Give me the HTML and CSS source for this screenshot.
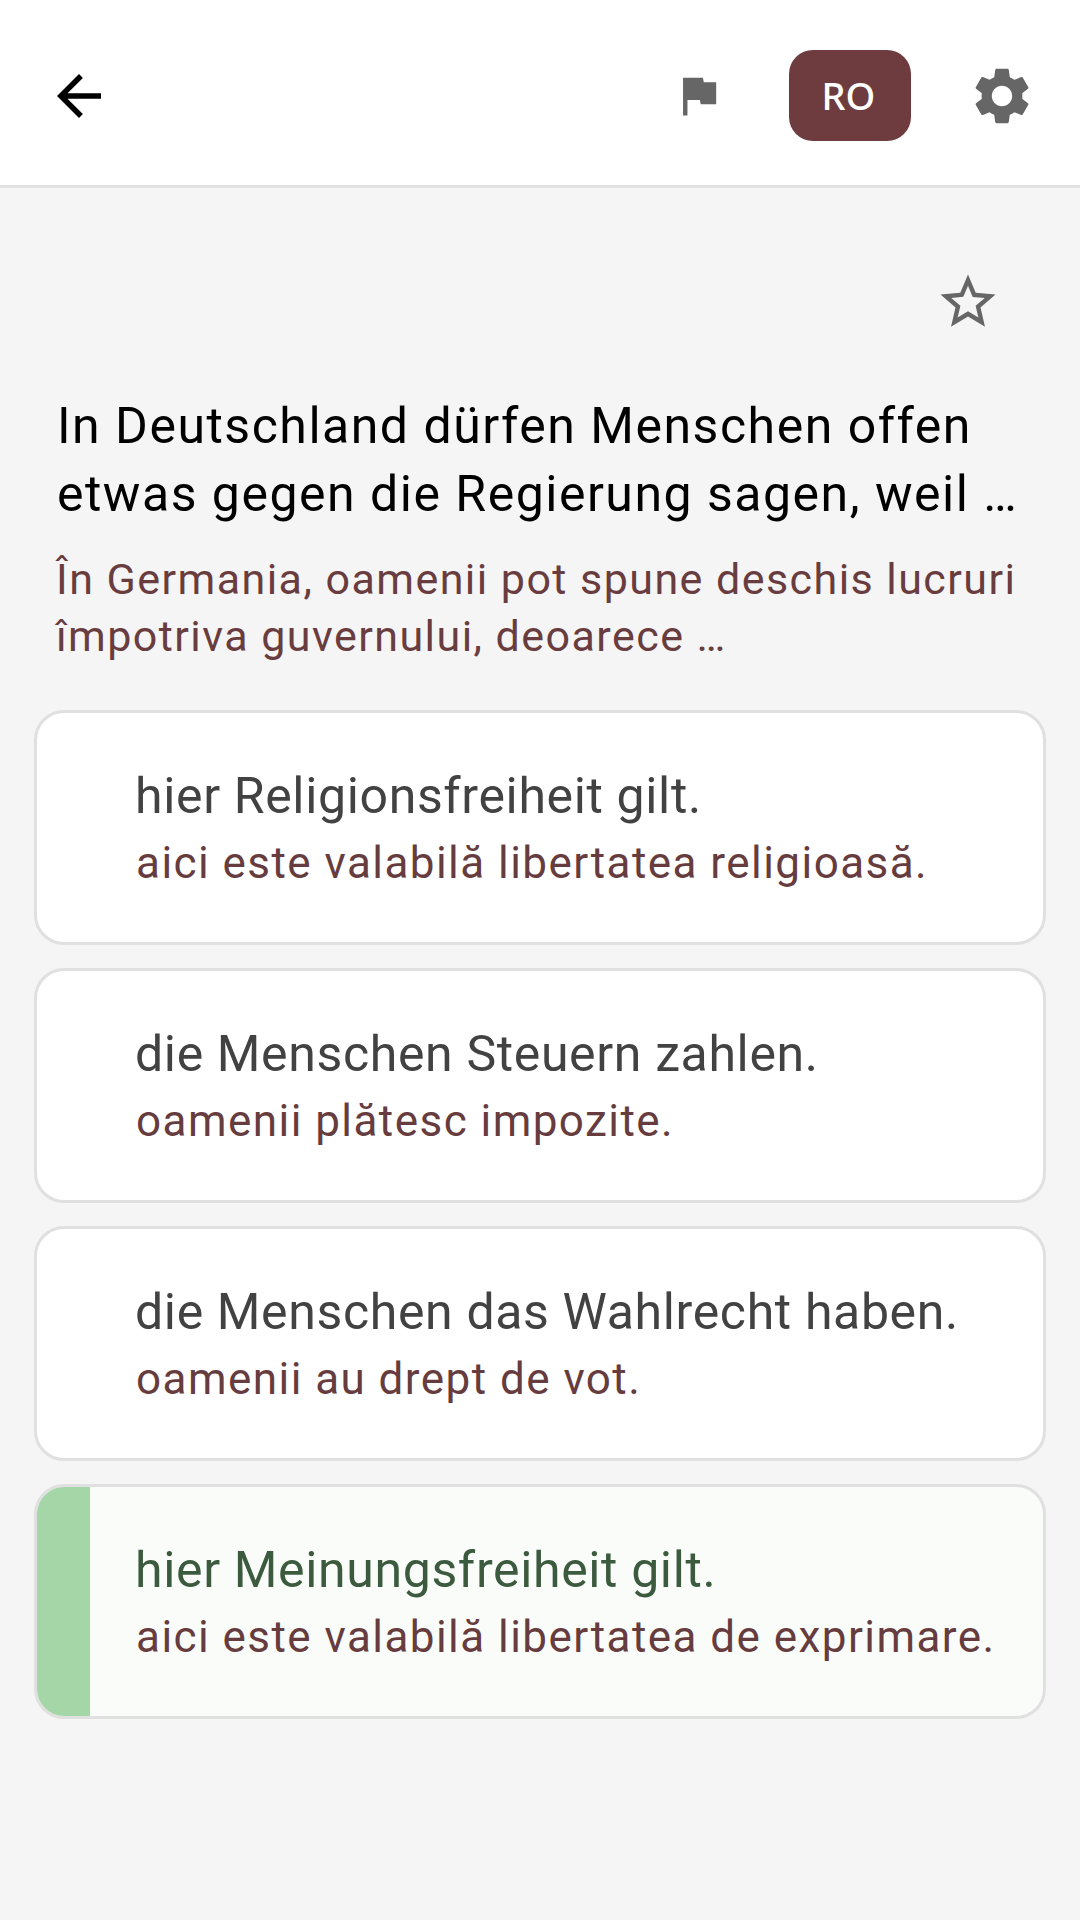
FILE: index.html
```html
<!DOCTYPE html>
<html lang="de">
<head>
    <meta charset="UTF-8">
    <meta name="viewport" content="width=device-width, initial-scale=1.0">
    <title>Frage</title>
    <link rel="stylesheet" href="styles.css">
</head>
<body>
    <header class="top-bar">
        <svg class="icon icon-back" viewBox="0 0 24 24"><path d="M20 11H7.83l5.59-5.59L12 4l-8 8 8 8 1.41-1.41L7.83 13H20v-2z"/></svg>
        <div class="top-actions">
            <svg class="icon icon-flag" viewBox="0 0 24 24"><path d="M14.4 6L14 4H5v17h2v-7h5.6l.4 2h7V6z"/></svg>
            <button class="lang-btn">RO</button>
            <svg class="icon icon-gear" viewBox="0 0 24 24"><path d="M19.14 12.94c.04-.3.06-.61.06-.94 0-.32-.02-.64-.07-.94l2.03-1.58c.18-.14.23-.41.12-.61l-1.92-3.32c-.12-.22-.37-.29-.59-.22l-2.39.96c-.5-.38-1.03-.7-1.62-.94l-.36-2.54c-.04-.24-.24-.41-.48-.41h-3.84c-.24 0-.43.17-.47.41l-.36 2.54c-.59.24-1.13.57-1.62.94l-2.39-.96c-.22-.08-.47 0-.59.22L2.74 8.87c-.12.21-.08.47.12.61l2.03 1.58c-.05.3-.09.63-.09.94s.02.64.07.94l-2.03 1.58c-.18.14-.23.41-.12.61l1.92 3.32c.12.22.37.29.59.22l2.39-.96c.5.38 1.03.7 1.62.94l.36 2.54c.05.24.24.41.48.41h3.84c.24 0 .44-.17.47-.41l.36-2.54c.59-.24 1.13-.56 1.62-.94l2.39.96c.22.08.47 0 .59-.22l1.92-3.32c.12-.22.07-.47-.12-.61l-2.01-1.58zM12 15.6c-1.98 0-3.6-1.62-3.6-3.6s1.62-3.6 3.6-3.6 3.6 1.62 3.6 3.6-1.62 3.6-3.6 3.6z"/></svg>
        </div>
    </header>

    <main class="content">
        <div class="star-row">
            <svg class="icon icon-star" viewBox="0 0 24 24"><path d="M22 9.24l-7.19-.62L12 2 9.19 8.63 2 9.24l5.46 4.73L5.82 21 12 17.27 18.18 21l-1.63-7.03L22 9.24zM12 15.4l-3.76 2.27 1-4.28-3.32-2.88 4.38-.38L12 6.1l1.71 4.04 4.38.38-3.32 2.88 1 4.28L12 15.4z"/></svg>
        </div>

        <div class="question">
            <h1>In Deutschland dürfen Menschen offen etwas gegen die Regierung sagen, weil …</h1>
            <p>În Germania, oamenii pot spune deschis lucruri împotriva guvernului, deoarece …</p>
        </div>

        <div class="answers">
            <div class="answer">
                <div class="answer-text">
                    <div class="answer-de">hier Religionsfreiheit gilt.</div>
                    <div class="answer-ro">aici este valabilă libertatea religioasă.</div>
                </div>
            </div>
            <div class="answer">
                <div class="answer-text">
                    <div class="answer-de">die Menschen Steuern zahlen.</div>
                    <div class="answer-ro">oamenii plătesc impozite.</div>
                </div>
            </div>
            <div class="answer">
                <div class="answer-text">
                    <div class="answer-de">die Menschen das Wahlrecht haben.</div>
                    <div class="answer-ro">oamenii au drept de vot.</div>
                </div>
            </div>
            <div class="answer correct">
                <div class="answer-mark"></div>
                <div class="answer-text">
                    <div class="answer-de">hier Meinungsfreiheit gilt.</div>
                    <div class="answer-ro">aici este valabilă libertatea de exprimare.</div>
                </div>
            </div>
        </div>
    </main>
</body>
</html>
```

FILE: styles.css
```css
* {
    margin: 0;
    padding: 0;
    box-sizing: border-box;
}

body {
    width: 1080px;
    height: 1920px;
    background-color: #f5f5f5;
    font-family: "Roboto", sans-serif;
    overflow: hidden;
}

.icon {
    display: block;
    flex: none;
    fill: #666666;
}

/* Top bar */
.top-bar {
    height: 188px;
    background-color: #fff;
    border-bottom: 3px solid #e2e2e2;
    display: flex;
    align-items: center;
    justify-content: space-between;
    padding: 6px 44px 0 46px;
}

.icon-back {
    width: 66px;
    height: 66px;
    fill: #000;
}

.top-actions {
    display: flex;
    align-items: center;
}

.icon-flag {
    width: 53px;
    height: 53px;
}

.lang-btn {
    width: 122px;
    height: 91px;
    margin: 0 57px 0 64px;
    padding: 0 3px 2px 0;
    border: none;
    border-radius: 24px;
    background-color: #6e3c3e;
    color: #fff;
    font-family: "Noto Sans", sans-serif;
    font-size: 38px;
    font-weight: 500;
}

.icon-gear {
    width: 68px;
    height: 68px;
}

/* Question */
.content {
    padding: 0 34px;
}

.star-row {
    display: flex;
    justify-content: flex-end;
    padding: 81px 45px 0 0;
}

.icon-star {
    width: 66px;
    height: 66px;
}

.question {
    padding: 57px 23px 0;
}

.question h1 {
    font-size: 50px;
    font-weight: 400;
    line-height: 68px;
    letter-spacing: 1.5px;
    color: #000;
}

.question p {
    margin: 23px 0 0 -1px;
    font-size: 43px;
    line-height: 57px;
    letter-spacing: 1.45px;
    color: #693d3f;
}

/* Answers */
.answers {
    display: flex;
    flex-direction: column;
    gap: 23px;
    margin-top: 45px;
}

.answer {
    height: 235px;
    display: flex;
    background-color: #fff;
    border: 3px solid #e0e0e0;
    border-radius: 30px;
    overflow: hidden;
}

.answer-text {
    padding: 53px 0 0 98px;
}

.answer-de {
    font-size: 50px;
    line-height: 60px;
    letter-spacing: 0.64px;
    color: #424242;
}

.answer-ro {
    margin: 12px 0 0 1px;
    font-size: 44px;
    line-height: 50px;
    letter-spacing: 1.45px;
    color: #663c3e;
}

.answer.correct {
    background-color: #fafcfa;
}

.answer-mark {
    width: 53px;
    background-color: #a5d6a7;
}

.correct .answer-text {
    padding-left: 45px;
}

.correct .answer-de {
    color: #3c5a3e;
}
```
